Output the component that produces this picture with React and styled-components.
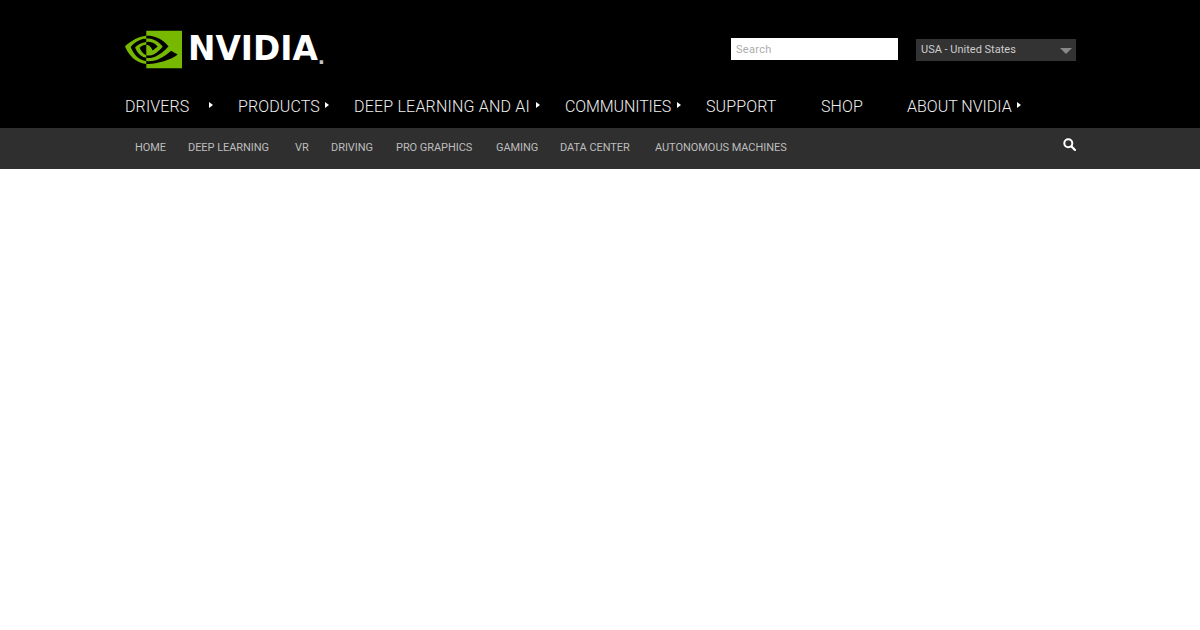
import styled, { createGlobalStyle } from "styled-components";
import { SiNvidia } from "react-icons/si";

const GlobalStyle = createGlobalStyle`
  html, body {
    margin: 0;
    background: #ffffff;
  }
  body {
    font-family: "Roboto", "Liberation Sans", sans-serif;
  }
`;

const Header = styled.header`
  background: #000000;
  height: 128px;
`;

const Inner = styled.div`
  width: 951px;
  margin-left: 125px;
`;

const TopRow = styled.div`
  height: 88px;
  display: flex;
  align-items: center;
  justify-content: space-between;
  padding-top: 10px;
  box-sizing: border-box;
`;

const Logo = styled.div`
  display: flex;
  align-items: center;
  gap: 6px;
`;

const LogoMark = styled(SiNvidia)`
  color: #76b900;
  display: block;
  width: 57px;
  height: 57px;
  margin: -11px 0;
`;

const LogoWord = styled.span`
  font-family: "DejaVu Sans", sans-serif;
  font-size: 32.8px;
  font-weight: 700;
  color: #ffffff;
  line-height: 36px;
`;

const LogoDot = styled.span`
  font-family: "DejaVu Sans", sans-serif;
  font-size: 19px;
  font-weight: 700;
  color: #c4c4c4;
  margin-left: -6px;
  align-self: flex-end;
  line-height: 19px;
`;

const TopControls = styled.div`
  display: flex;
  align-items: flex-start;
  gap: 18px;
`;

const SearchBox = styled.div`
  width: 167px;
  height: 22px;
  background: #ffffff;
  color: #adadad;
  font-size: 11px;
  letter-spacing: 0.3px;
  line-height: 23px;
  padding-left: 5px;
  box-sizing: border-box;
`;

const CountrySelect = styled.div`
  width: 160px;
  height: 22px;
  margin-top: 1px;
  background: #333333;
  color: #cccccc;
  font-size: 11px;
  line-height: 20px;
  padding-left: 5px;
  box-sizing: border-box;
  display: flex;
  align-items: center;
  justify-content: space-between;
`;

const SelectArrow = styled.span`
  width: 0;
  height: 0;
  margin: 3px 4px 0 0;
  border-left: 6px solid transparent;
  border-right: 6px solid transparent;
  border-top: 6px solid #888888;
`;

const MainNav = styled.nav`
  height: 40px;
  display: flex;
  align-items: flex-start;
`;

const MainItem = styled.a`
  display: flex;
  width: ${(p) => p.$width}px;
  flex: none;
  font-size: 16px;
  font-weight: 300;
  line-height: 38px;
  color: #f0f0f0;
  letter-spacing: ${(p) => p.$spacing ?? 0.12}px;
  position: relative;
`;

const Caret = styled.span`
  position: absolute;
  left: ${(p) => p.$left}px;
  top: 14px;
  width: 0;
  height: 0;
  border-top: 3px solid transparent;
  border-bottom: 3px solid transparent;
  border-left: 4px solid #ffffff;
`;

const SubBar = styled.div`
  height: 41px;
  background: #2f2f2f;
  box-sizing: border-box;
`;

const SubInner = styled(Inner)`
  height: 38px;
  display: flex;
  align-items: center;
  justify-content: space-between;
`;

const SubNav = styled.nav`
  display: flex;
  padding-left: 10px;
  padding-top: 1px;
`;

const SubItem = styled.a`
  width: ${(p) => p.$width}px;
  font-size: 11px;
  letter-spacing: -0.05px;
  color: #bdbdbd;
  white-space: nowrap;
`;

const SearchSvg = styled.svg`
  width: 13px;
  height: 13px;
  margin-bottom: 5px;
`;

const SearchIcon = () => (
  <SearchSvg viewBox="0 0 13 13">
    <circle cx="5.3" cy="5.3" r="4" fill="none" stroke="#fff" strokeWidth="2" />
    <line x1="8.4" y1="8.4" x2="12" y2="12" stroke="#fff" strokeWidth="2.2" strokeLinecap="round" />
  </SearchSvg>
);

const mainItems = [
  { label: "DRIVERS", width: 113, caret: 84 },
  { label: "PRODUCTS", width: 116, caret: 87 },
  { label: "DEEP LEARNING AND AI", width: 211, caret: 182, spacing: 0.2 },
  { label: "COMMUNITIES", width: 141, caret: 112, spacing: -0.1 },
  { label: "SUPPORT", width: 115 },
  { label: "SHOP", width: 86 },
  { label: "ABOUT NVIDIA", width: 120, caret: 110, spacing: 0 },
];

const subItems = [
  { label: "HOME", width: 53 },
  { label: "DEEP LEARNING", width: 107 },
  { label: "VR", width: 36 },
  { label: "DRIVING", width: 65 },
  { label: "PRO GRAPHICS", width: 100 },
  { label: "GAMING", width: 64 },
  { label: "DATA CENTER", width: 95 },
  { label: "AUTONOMOUS MACHINES", width: 130 },
];

export default function App() {
  return (
    <>
      <GlobalStyle />
      <Header>
        <Inner>
          <TopRow>
            <Logo>
              <LogoMark />
              <LogoWord>NVIDIA</LogoWord>
              <LogoDot>.</LogoDot>
            </Logo>
            <TopControls>
              <SearchBox>Search</SearchBox>
              <CountrySelect>
                USA - United States
                <SelectArrow />
              </CountrySelect>
            </TopControls>
          </TopRow>
          <MainNav>
            {mainItems.map((item) => (
              <MainItem key={item.label} $width={item.width} $spacing={item.spacing}>
                {item.label}
                {item.caret && <Caret $left={item.caret} />}
              </MainItem>
            ))}
          </MainNav>
        </Inner>
      </Header>
      <SubBar>
        <SubInner>
          <SubNav>
            {subItems.map((item) => (
              <SubItem key={item.label} $width={item.width}>
                {item.label}
              </SubItem>
            ))}
          </SubNav>
          <SearchIcon />
        </SubInner>
      </SubBar>
    </>
  );
}
